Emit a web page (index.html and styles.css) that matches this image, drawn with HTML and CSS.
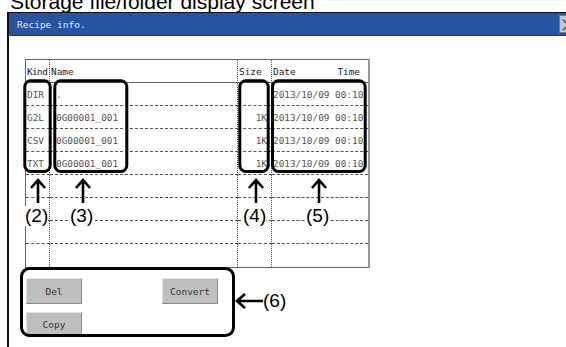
FILE: index.html
```html
<!DOCTYPE html>
<html lang="en">
<head>
    <meta charset="UTF-8">
    <title>Storage file/folder display screen</title>
    <link rel="stylesheet" href="styles.css">
</head>
<body>
    <div class="caption">Storage file/folder display screen</div>

    <div class="window">
        <div class="titlebar">
            <span class="title">Recipe info.</span>
            <span class="close">
                <svg width="18" height="18" viewBox="0 0 18 18">
                    <path d="M3 3 L15 15 M15 3 L3 15" stroke="#333" stroke-width="1.2" fill="none"/>
                </svg>
            </span>
        </div>
        <div class="band"></div>

        <div class="content">
            <div class="files">
                <div class="cell head kind">Kind</div>
                <div class="cell head">Name</div>
                <div class="cell head">Size</div>
                <div class="cell head split"><span>Date</span><span>Time</span></div>

                <div class="cell">DIR</div>
                <div class="cell name">.</div>
                <div class="cell size"></div>
                <div class="cell">2013/10/09 00:10</div>

                <div class="cell">G2L</div>
                <div class="cell name">0G00001_001</div>
                <div class="cell size">1K</div>
                <div class="cell">2013/10/09 00:10</div>

                <div class="cell">CSV</div>
                <div class="cell name">0G00001_001</div>
                <div class="cell size">1K</div>
                <div class="cell">2013/10/09 00:10</div>

                <div class="cell">TXT</div>
                <div class="cell name">0G00001_001</div>
                <div class="cell size">1K</div>
                <div class="cell">2013/10/09 00:10</div>

                <div class="cell"></div><div class="cell"></div><div class="cell"></div><div class="cell"></div>
                <div class="cell"></div><div class="cell"></div><div class="cell"></div><div class="cell"></div>
                <div class="cell"></div><div class="cell"></div><div class="cell"></div><div class="cell"></div>
                <div class="cell last"></div><div class="cell last"></div><div class="cell last"></div><div class="cell last"></div>
            </div>

            <div class="actions">
                <button class="btn del">Del</button>
                <button class="btn convert">Convert</button>
                <button class="btn copy">Copy</button>
            </div>
        </div>
    </div>

    <!-- callouts drawn over the screen -->
    <div class="notes">
        <svg width="566" height="347" viewBox="0 0 566 347">
            <g fill="none" stroke="#000" stroke-width="3">
                <rect x="24.8" y="80.8" width="25.4" height="90.7" rx="6"/>
                <rect x="54.8" y="80.8" width="72" height="90.7" rx="6"/>
                <rect x="239.8" y="80.8" width="28.4" height="90.7" rx="6"/>
                <rect x="272.5" y="80.8" width="92.7" height="90.7" rx="6"/>
                <rect x="21.5" y="268.5" width="212" height="67" rx="8"/>
            </g>
            <g fill="none" stroke="#000" stroke-width="2.6" stroke-linejoin="miter">
                <path d="M38 180 V203 M31 188 L38 180 L45 188"/>
                <path d="M83 180 V203 M76 188 L83 180 L90 188"/>
                <path d="M256 180 V203 M249 188 L256 180 L263 188"/>
                <path d="M319 180 V203 M312 188 L319 180 L326 188"/>
                <path d="M237 301 H263 M245 294 L237 301 L245 308"/>
            </g>
        </svg>
        <div class="label l2">(2)</div>
        <div class="label l3">(3)</div>
        <div class="label l4">(4)</div>
        <div class="label l5">(5)</div>
        <div class="label l6">(6)</div>
    </div>
</body>
</html>
```

FILE: styles.css
```css
body {
    margin: 0;
    width: 566px;
    height: 347px;
    overflow: hidden;
    position: relative;
    background-color: #fff;
    font-family: 'Liberation Sans', Arial, sans-serif;
    color: #000;
}

.caption {
    margin-top: -4px;
    height: 16px;
    line-height: 12px;
    padding-left: 10px;
    font-size: 21px;
    white-space: nowrap;
}

.window {
    margin-left: 7px;
    height: 335px;
    border-left: 2px solid #111;
    border-top: 1px solid #111;
}

.titlebar {
    height: 22px;
    background-color: #2654a2;
    border-bottom: 1px solid #1a3b7a;
    display: flex;
    align-items: center;
    justify-content: space-between;
    padding-left: 8px;
}

.title {
    font-family: 'DejaVu Sans Mono', monospace;
    font-size: 9.5px;
    color: #e4ebf5;
}

.close {
    width: 18px;
    height: 18px;
    margin-right: -11px;
    background-color: #c8c8c8;
    border: 1px solid #7a7a7a;
    box-sizing: border-box;
    display: flex;
}

.band {
    height: 4px;
    background-color: #fcf9ee;
}

.content {
    padding: 19px 0 0 16px;
}

.files {
    display: grid;
    grid-template-columns: 24px 188px 34px 96px;
    grid-auto-rows: 23px;
    width: 342px;
    border: 1px solid #666;
    border-right: 2px solid #999;
    font-family: 'DejaVu Sans Mono', monospace;
    font-size: 9.4px;
    color: #555;
}

.cell {
    box-sizing: border-box;
    border-bottom: 1px dashed #555;
    border-right: 1px dotted #555;
    display: flex;
    align-items: center;
    padding-left: 1px;
    white-space: nowrap;
    overflow: hidden;
}

.cell:nth-child(4n) {
    border-right: none;
}

.cell.last {
    border-bottom: none;
}

.head {
    color: #222;
    border-bottom: 1px solid #666;
}

.kind {
    letter-spacing: -0.6px;
}

.split {
    justify-content: space-between;
    padding-right: 8px;
}

.name {
    padding-left: 6px;
}

.size {
    justify-content: flex-end;
    padding-right: 4px;
}

.actions {
    margin: 10px 0 0 1px;
    width: 192px;
    display: grid;
    grid-template-columns: 56px 1fr 56px;
    grid-template-rows: 26px 25px;
    row-gap: 8px;
}

.btn {
    background-color: #bfbfbf;
    border: 1px solid #8a8a8a;
    border-top-color: #e2e2e2;
    border-left-color: #e2e2e2;
    font-family: 'DejaVu Sans Mono', monospace;
    font-size: 9.5px;
    color: #333;
    padding: 0;
}

.convert {
    grid-column: 3;
}

.copy {
    grid-column: 1;
}

.notes {
    position: absolute;
    left: 0;
    top: 0;
    width: 566px;
    height: 347px;
    pointer-events: none;
}

.notes svg {
    display: block;
}

.label {
    position: absolute;
    font-size: 19px;
    line-height: 20px;
    background-color: #fff;
}

.l2 { left: 25px; top: 206px; }
.l3 { left: 70px; top: 206px; }
.l4 { left: 243px; top: 206px; }
.l5 { left: 306px; top: 206px; }
.l6 { left: 263px; top: 291px; }
```
